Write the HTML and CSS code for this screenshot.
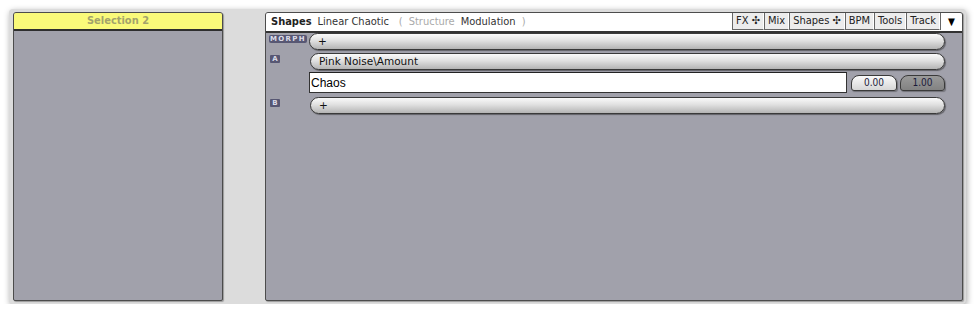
FILE: index.html
```html
<!DOCTYPE html>
<html lang="en">
<head>
  <meta charset="UTF-8" />
  <title>Shapes</title>
  <link rel="stylesheet" href="styles.css">
</head>
<body>
  <div class="frame">
    <div class="panel left">
      <div class="sel-head">Selection 2</div>
      <div class="sel-body"></div>
    </div>

    <div class="panel right">
      <div class="head">
        <div class="crumbs">
          <b>Shapes</b>
          <span>Linear Chaotic</span>
          <span class="dim open">(</span>
          <span class="dim">Structure</span>
          <span>Modulation</span>
          <span class="dim">)</span>
        </div>
        <div class="tabs">
          <span class="tab">FX &#10019;</span>
          <span class="tab">Mix</span>
          <span class="tab">Shapes &#10019;</span>
          <span class="tab">BPM</span>
          <span class="tab">Tools</span>
          <span class="tab">Track</span>
          <span class="drop">&#9660;</span>
        </div>
      </div>

      <div class="body">
        <div class="row">
          <span class="tag morph">MORPH</span>
          <div class="pill">+</div>
        </div>
        <div class="row">
          <span class="tag">A</span>
          <div class="pill">Pink Noise\Amount</div>
        </div>
        <div class="row value">
          <span class="tag blank"></span>
          <input class="field" type="text" value="Chaos" />
          <button class="num">0.00</button>
          <button class="num dark">1.00</button>
        </div>
        <div class="row">
          <span class="tag">B</span>
          <div class="pill">+</div>
        </div>
      </div>
    </div>
  </div>
</body>
</html>
```

FILE: styles.css
```css
* {
  box-sizing: border-box;
}

body {
  margin: 0;
  background: #fff;
  font-family: "DejaVu Sans Condensed", "DejaVu Sans", sans-serif;
  font-size: 11px;
  color: #222;
}

.frame {
  margin: 9px 0 0 9px;
  width: 957px;
  height: 295px;
  background: #dcdcdc;
  border-radius: 4px;
  box-shadow: 1px 2px 6px rgba(0, 0, 0, 0.35);
  padding: 3px 3px 0 4px;
  display: flex;
  gap: 42px;
}

.panel {
  height: 289px;
  display: flex;
  flex-direction: column;
  border: 1px solid #4c4c4c;
  border-radius: 3px 3px 2px 2px;
  background: #a1a1ab;
  box-shadow: 1px 1px 1px rgba(0, 0, 0, 0.3);
  overflow: hidden;
}

.left {
  width: 210px;
}

.sel-head {
  height: 18px;
  background: #fafa7a;
  border-bottom: 2px solid #2e2e2e;
  text-align: center;
  font-weight: bold;
  color: #a3a36c;
  line-height: 16px;
}

.right {
  width: 698px;
}

.head {
  height: 20px;
  background: #fff;
  border-bottom: 2px solid #333;
  display: flex;
  justify-content: space-between;
  align-items: flex-start;
}

.crumbs {
  display: flex;
  gap: 6px;
  padding: 2px 0 0 5px;
  color: #333;
  line-height: 14px;
}

.crumbs b {
  color: #222;
}

.dim {
  color: #aaa;
}

.open {
  margin-left: 4px;
}

.tabs {
  display: flex;
  height: 17px;
}

.tab {
  padding: 0 3px;
  background: #ececec;
  border-left: 1px solid #666;
  border-bottom: 1px solid #666;
  border-right: 1px solid #fff;
  line-height: 16px;
  color: #222;
}

.drop {
  width: 22px;
  text-align: center;
  line-height: 17px;
  border-left: 1px solid #666;
  font-size: 10px;
  color: #000;
}

.body {
  padding: 0 17px 0 3px;
  display: flex;
  flex-direction: column;
  gap: 3px;
}

.row {
  display: flex;
  align-items: flex-start;
  gap: 2px;
}

.tag {
  width: 38px;
  flex: none;
  font-family: "DejaVu Sans", sans-serif;
  font-size: 7px;
  font-weight: bold;
  line-height: 8px;
  color: #dcdce8;
}

.tag:not(.morph):not(.blank) {
  width: 10px;
  margin: 2px 28px 0 1px;
  background: #575773;
  border-radius: 1px;
  text-align: center;
}

.morph {
  margin-top: 2px;
  background: #575773;
  border-radius: 2px;
  letter-spacing: 1.3px;
  padding-left: 1px;
  height: 8px;
}

.pill {
  flex: 1;
  height: 17px;
  padding-left: 8px;
  border: 1px solid #3a3a3a;
  border-radius: 9px;
  background: linear-gradient(#fafafa, #e0e0e0 45%, #b4b4b4);
  box-shadow: 1px 1px 1px rgba(0, 0, 0, 0.4);
  font-family: "DejaVu Sans", sans-serif;
  font-size: 10.5px;
  line-height: 15px;
  color: #111;
}

.value {
  align-items: center;
  gap: 0;
  margin: -1px 0 1px;
}

.field {
  width: 538px;
  height: 21px;
  margin: 0 4px 0 2px;
  border: 1px solid #333;
  border-top-color: #222;
  background: #fff;
  font-family: "Liberation Sans", Arial, sans-serif;
  font-size: 12px;
  padding: 0 1px;
  outline: none;
}

.num {
  width: 46px;
  height: 16px;
  margin-right: 3px;
  padding: 0;
  border: 1px solid #3a3a3a;
  border-radius: 8px 8px 3px 3px;
  background: linear-gradient(#fafafa, #d6d6d6);
  font-family: "DejaVu Sans Condensed", "DejaVu Sans", sans-serif;
  font-size: 10px;
  color: #1a1a3a;
  box-shadow: 1px 1px 1px rgba(0, 0, 0, 0.3);
}

.num.dark {
  width: 45px;
  margin-right: 0;
  background: linear-gradient(#9a9a9a, #828282);
}
```
